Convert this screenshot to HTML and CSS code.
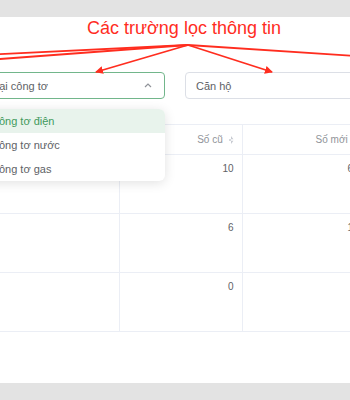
FILE: index.html
```html
<!DOCTYPE html>
<html lang="vi">
<head>
    <meta charset="UTF-8">
    <meta name="viewport" content="width=device-width, initial-scale=1.0">
    <title>Bộ lọc công tơ</title>
    <link rel="stylesheet" href="styles.css">
</head>
<body>
    <div class="page">
        <h1 class="note">Các trường lọc thông tin</h1>

        <!-- Annotation arrows -->
        <svg class="arrows" width="350" height="80" viewBox="0 0 350 80">
            <defs>
                <marker id="head" markerWidth="8" markerHeight="8" refX="7" refY="4" orient="auto" markerUnits="userSpaceOnUse">
                    <path d="M0,0 L8,4 L0,8 z" fill="#ff2d1f"/>
                </marker>
            </defs>
            <g stroke="#ff2d1f" stroke-width="1.8" fill="none">
                <line x1="188" y1="28" x2="-20" y2="38"/>
                <line x1="188" y1="28" x2="-20" y2="43.5"/>
                <line x1="188" y1="28" x2="96" y2="55" marker-end="url(#head)"/>
                <line x1="188" y1="28" x2="272" y2="55" marker-end="url(#head)"/>
                <line x1="188" y1="28" x2="370" y2="40"/>
            </g>
        </svg>

        <div class="filters">
            <div class="select active">
                <span>Loại công tơ</span>
                <svg width="8" height="5" viewBox="0 0 8 5"><path d="M1 4 L4 1 L7 4" stroke="#909399" stroke-width="1.2" fill="none"/></svg>
            </div>
            <div class="select wide">
                <span>Căn hộ</span>
            </div>
        </div>

        <table class="grid">
            <thead>
                <tr>
                    <th class="c1"></th>
                    <th class="c2">Số cũ <span class="sort"></span></th>
                    <th class="c3">Số mới <span class="sort"></span></th>
                </tr>
            </thead>
            <tbody>
                <tr><td></td><td>10</td><td>65</td></tr>
                <tr><td></td><td>6</td><td>12</td></tr>
                <tr><td></td><td>0</td><td></td></tr>
            </tbody>
        </table>

        <ul class="dropdown">
            <li class="selected">Công tơ điện</li>
            <li>Công tơ nước</li>
            <li>Công tơ gas</li>
        </ul>
    </div>
</body>
</html>
```

FILE: styles.css
```css
body { margin: 0; background: #e3e3e3; font-family: "Liberation Sans", Arial, sans-serif; color: #606266; }
.page { position: relative; margin-top: 17px; height: 366px; background: #fff; overflow: hidden; }

.note { margin: 0; padding: 1px 0 0 87px; font-size: 18px; font-weight: normal; line-height: 20px; color: #ff2d1f; }
.arrows { position: absolute; left: 0; top: 0; overflow: visible; }

.filters { display: flex; gap: 20px; margin: 34px 0 0 -28px; }
.select { box-sizing: border-box; width: 193px; height: 27px; padding: 0 12px 0 14px; display: flex; align-items: center; justify-content: space-between; border: 1px solid #dcdfe6; border-radius: 4px; font-size: 11px; flex-shrink: 0; }
.select.active { border-color: #72b68b; }
.select.wide { width: 220px; padding-left: 10px; }

.grid { width: 397px; border-collapse: collapse; table-layout: fixed; margin: 25px 0 0 -30px; font-size: 10px; }
.grid th, .grid td { box-sizing: border-box; border: 1px solid #ebeef5; padding: 0 8px; text-align: right; }
.grid th { height: 30px; font-weight: normal; color: #909399; }
.grid td { height: 59px; vertical-align: top; padding-top: 8px; }
.grid tr > :first-child { border-left: none; }
.c1 { width: 149px; }
.c2 { width: 123px; }
.c3 { width: 125px; }
.sort { display: inline-block; width: 5px; height: 8px; margin-left: 3px; vertical-align: -1px; background: #c8cbd2; clip-path: polygon(50% 0, 100% 40%, 0 40%, 0 60%, 100% 60%, 50% 100%); }

.dropdown { position: absolute; left: -30px; top: 92px; width: 195px; margin: 0; padding: 0; list-style: none; background: #fff; border-radius: 6px; box-shadow: 0 2px 12px rgba(0, 0, 0, 0.12); overflow: hidden; font-size: 11px; }
.dropdown li { height: 24px; line-height: 24px; padding-left: 21px; }
.dropdown .selected { background: #e8f3ec; color: #3f9a5c; }
```
